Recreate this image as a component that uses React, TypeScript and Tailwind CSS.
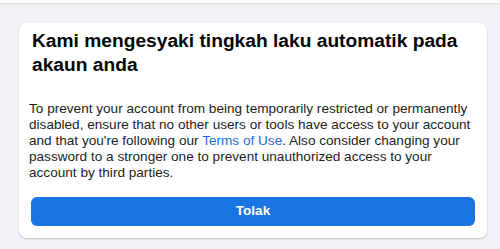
import React from 'react'

const font = { fontFamily: '"Liberation Sans", Arial, Helvetica, sans-serif' }

export default function App() {
  return (
    <div className="w-[500px] h-[249px] bg-[#f0f2f5] overflow-hidden" style={font}>
      {/* top bar remnant */}
      <div className="h-[3px] bg-white shadow-[0_1px_2px_rgba(0,0,0,0.1)]" />

      <div className="pl-[19px] pr-[13px] pt-[20px]">
        <div className="bg-white rounded-lg shadow-[0_1px_2px_rgba(0,0,0,0.2)] px-3 pt-[6px] pb-3">
          <h1 className="pl-[1px] text-[19.2px] leading-[24px] font-bold text-[#050505]">
            Kami mengesyaki tingkah laku automatik pada akaun anda
          </h1>

          <p className="mt-[24px] -ml-[2px] text-[13.6px] leading-[16px] text-[#1c1e21]">
            To prevent your account from being temporarily restricted or permanently
            disabled, ensure that no other users or tools have access to your account
            and that you're following our{' '}
            <a href="#" className="text-[#216fdb]">
              Terms of Use
            </a>
            . Also consider changing your password to a stronger one to prevent
            unauthorized access to your account by third parties.
          </p>

          <button className="mt-[16px] w-full h-[29px] rounded-md bg-[#1b74e4] text-white text-[13.6px] font-bold">
            Tolak
          </button>
        </div>
      </div>
    </div>
  )
}
